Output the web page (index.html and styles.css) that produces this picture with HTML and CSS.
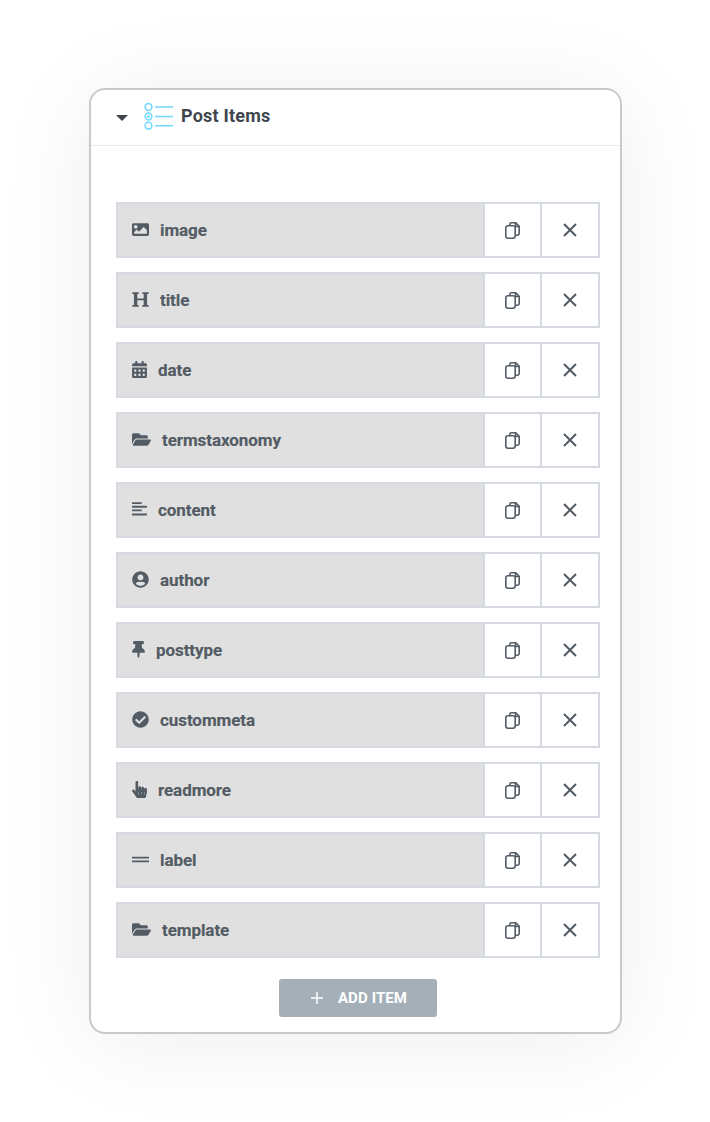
FILE: index.html
```html
<!DOCTYPE html>
<html lang="en">
<head>
<meta charset="utf-8">
<title>Post Items</title>
<link rel="stylesheet" href="styles.css">
</head>
<body>
<svg class="defs" width="0" height="0" aria-hidden="true">
  <symbol id="i-image" viewBox="0 0 512 512"><path d="M464 448H48c-26.51 0-48-21.49-48-48V112c0-26.51 21.49-48 48-48h416c26.51 0 48 21.49 48 48v288c0 26.51-21.49 48-48 48zM112 120c-30.928 0-56 25.072-56 56s25.072 56 56 56 56-25.072 56-56-25.072-56-56-56zM64 384h384V272l-87.515-87.515c-4.686-4.686-12.284-4.686-16.971 0L208 320l-55.515-55.515c-4.686-4.686-12.284-4.686-16.971 0L64 336v48z"/></symbol>
  <symbol id="i-heading" viewBox="0 0 512 512"><path d="M10 40h190v50h-40v135h192V90h-40V40h190v50h-48v332h48v50H312v-50h40V278H160v144h40v50H10v-50h48V90H10z"/></symbol>
  <symbol id="i-calendar" viewBox="0 0 448 512"><path d="M0 464c0 26.5 21.5 48 48 48h352c26.5 0 48-21.5 48-48V192H0v272zm320-196c0-6.6 5.4-12 12-12h40c6.6 0 12 5.4 12 12v40c0 6.6-5.4 12-12 12h-40c-6.6 0-12-5.4-12-12v-40zm0 128c0-6.6 5.4-12 12-12h40c6.6 0 12 5.4 12 12v40c0 6.6-5.4 12-12 12h-40c-6.6 0-12-5.4-12-12v-40zM192 268c0-6.6 5.4-12 12-12h40c6.6 0 12 5.4 12 12v40c0 6.6-5.4 12-12 12h-40c-6.6 0-12-5.4-12-12v-40zm0 128c0-6.6 5.4-12 12-12h40c6.6 0 12 5.4 12 12v40c0 6.6-5.4 12-12 12h-40c-6.6 0-12-5.4-12-12v-40zM64 268c0-6.6 5.4-12 12-12h40c6.6 0 12 5.4 12 12v40c0 6.6-5.4 12-12 12H76c-6.6 0-12-5.4-12-12v-40zm0 128c0-6.6 5.4-12 12-12h40c6.6 0 12 5.4 12 12v40c0 6.6-5.4 12-12 12H76c-6.6 0-12-5.4-12-12v-40zM400 64h-48V16c0-8.8-7.2-16-16-16h-32c-8.8 0-16 7.2-16 16v48H160V16c0-8.8-7.2-16-16-16h-32c-8.8 0-16 7.2-16 16v48H48C21.500 64 0 85.500 0 112v48h448v-48c0-26.500-21.500-48-48-48z"/></symbol>
  <symbol id="i-folder" viewBox="0 0 576 512"><path d="M572.694 292.093L500.27 416.248A63.997 63.997 0 0 1 444.989 448H45.025c-18.523 0-30.064-20.093-20.731-36.093l72.424-124.155A64 64 0 0 1 152 256h399.964c18.523 0 30.064 20.093 20.73 36.093zM152 224h328v-48c0-26.51-21.49-48-48-48H272l-64-64H48C21.49 64 0 85.49 0 112v278.046l69.077-118.418C86.214 242.25 117.989 224 152 224z"/></symbol>
  <symbol id="i-align" viewBox="0 0 448 512"><path d="M0 36h290v56H0zM0 146h448v56H0zM0 256h290v56H0zM0 380h448v56H0z"/></symbol>
  <symbol id="i-user" viewBox="0 0 496 512"><path d="M248 8C111 8 0 119 0 256s111 248 248 248 248-111 248-248S385 8 248 8zm0 96c48.6 0 88 39.4 88 88s-39.4 88-88 88-88-39.4-88-88 39.4-88 88-88zm0 344c-58.7 0-111.3-26.6-146.5-68.2 18.8-35.4 55.6-59.8 98.5-59.8 2.4 0 4.8.4 7.1 1.1 13 4.2 26.6 6.9 40.9 6.9 14.3 0 28-2.7 40.9-6.9 2.3-.7 4.7-1.1 7.1-1.1 42.9 0 79.7 24.4 98.5 59.8C359.3 421.4 306.7 448 248 448z"/></symbol>
  <symbol id="i-pin" viewBox="0 0 384 512"><path d="M298.028 214.267L285.793 96H328c13.255 0 24-10.745 24-24V24c0-13.255-10.745-24-24-24H56C42.745 0 32 10.745 32 24v48c0 13.255 10.745 24 24 24h42.207L85.972 214.267C37.465 236.82 0 277.261 0 328c0 13.255 10.745 24 24 24h136v104.007c0 1.242.289 2.467.845 3.578l24 48c2.941 5.882 11.364 5.893 14.311 0l24-48a8.008 8.008 0 0 0 .845-3.578V352h136c13.255 0 24-10.745 24-24-.001-51.183-37.983-91.42-85.973-113.733z"/></symbol>
  <symbol id="i-check" viewBox="0 0 512 512"><path d="M504 256c0 136.967-111.033 248-248 248S8 392.967 8 256 119.033 8 256 8s248 111.033 248 248zM227.314 387.314l184-184c6.248-6.248 6.248-16.379 0-22.627l-22.627-22.627c-6.248-6.249-16.379-6.249-22.628 0L216 308.118l-70.059-70.059c-6.248-6.248-16.379-6.248-22.628 0l-22.627 22.627c-6.248 6.248-6.248 16.379 0 22.627l104 104c6.249 6.249 16.379 6.249 22.628.001z"/></symbol>
  <symbol id="i-hand" viewBox="0 0 448 512"><path d="M448 240v96c0 3.084-.356 6.159-1.063 9.162l-32 136C410.686 499.23 394.562 512 376 512H168a40.004 40.004 0 0 1-32.35-16.473l-127.997-176c-12.993-17.866-9.043-42.883 8.822-55.876 17.867-12.994 42.884-9.043 55.877 8.823L104 315.992V40c0-22.091 17.908-40 40-40s40 17.909 40 40v200h8v-40c0-22.091 17.908-40 40-40s40 17.909 40 40v40h8v-24c0-22.091 17.908-40 40-40s40 17.909 40 40v24h8c0-22.091 17.908-40 40-40s40 17.909 40 40zm-256 80h-8v96h8v-96zm88 0h-8v96h8v-96zm88 0h-8v96h8v-96z"/></symbol>
  <symbol id="i-equals" viewBox="0 0 512 512"><path d="M0 172h512v56H0zM0 284h512v56H0z"/></symbol>
  <symbol id="i-copy" viewBox="0 0 15 17"><path d="M4.800 3.500V2.400C4.800 1.400 5.500.8 6.400.8h4.400l3.400 3.400v7.400c0 .9-.7 1.600-1.600 1.600h-2.100M10.500.8v3.700h3.700" fill="none" stroke="currentColor" stroke-width="1.600" stroke-linejoin="round"/><rect x=".8" y="3.800" width="9.400" height="12.400" rx="2.200" fill="none" stroke="currentColor" stroke-width="1.600"/></symbol>
  <symbol id="i-x" viewBox="0 0 14 14"><path d="M1 1l12 12M13 1L1 13" fill="none" stroke="currentColor" stroke-width="2"/></symbol>
</svg>

<main class="card">
  <header class="head">
    <span class="caret"></span>
    <svg class="list-icon" viewBox="0 0 30 28" aria-hidden="true">
      <g fill="none" stroke="#6fd8fc" stroke-width="1.500">
        <circle cx="4.500" cy="5" r="3.400"/><circle cx="4.500" cy="14.500" r="3.400"/><circle cx="4.500" cy="23.700" r="3.400"/>
        <path d="M11 5h18M11 14.500h18M11 23.700h18"/>
      </g>
      <circle cx="4.500" cy="14.500" r="1.500" fill="#6fd8fc"/>
    </svg>
    <h2 class="title">Post Items</h2>
  </header>
  <div class="rows">
    <div class="row"><div class="name"><svg class="ic w512"><use href="#i-image"/></svg>image</div><button class="act"><svg class="copy"><use href="#i-copy"/></svg></button><button class="act last"><svg class="x"><use href="#i-x"/></svg></button></div>
    <div class="row"><div class="name"><svg class="ic w512"><use href="#i-heading"/></svg>title</div><button class="act"><svg class="copy"><use href="#i-copy"/></svg></button><button class="act last"><svg class="x"><use href="#i-x"/></svg></button></div>
    <div class="row"><div class="name"><svg class="ic w448"><use href="#i-calendar"/></svg>date</div><button class="act"><svg class="copy"><use href="#i-copy"/></svg></button><button class="act last"><svg class="x"><use href="#i-x"/></svg></button></div>
    <div class="row"><div class="name"><svg class="ic w576"><use href="#i-folder"/></svg>termstaxonomy</div><button class="act"><svg class="copy"><use href="#i-copy"/></svg></button><button class="act last"><svg class="x"><use href="#i-x"/></svg></button></div>
    <div class="row"><div class="name"><svg class="ic w448"><use href="#i-align"/></svg>content</div><button class="act"><svg class="copy"><use href="#i-copy"/></svg></button><button class="act last"><svg class="x"><use href="#i-x"/></svg></button></div>
    <div class="row"><div class="name"><svg class="ic w496"><use href="#i-user"/></svg>author</div><button class="act"><svg class="copy"><use href="#i-copy"/></svg></button><button class="act last"><svg class="x"><use href="#i-x"/></svg></button></div>
    <div class="row"><div class="name"><svg class="ic w384"><use href="#i-pin"/></svg>posttype</div><button class="act"><svg class="copy"><use href="#i-copy"/></svg></button><button class="act last"><svg class="x"><use href="#i-x"/></svg></button></div>
    <div class="row"><div class="name"><svg class="ic w512"><use href="#i-check"/></svg>custommeta</div><button class="act"><svg class="copy"><use href="#i-copy"/></svg></button><button class="act last"><svg class="x"><use href="#i-x"/></svg></button></div>
    <div class="row"><div class="name"><svg class="ic w448"><use href="#i-hand"/></svg>readmore</div><button class="act"><svg class="copy"><use href="#i-copy"/></svg></button><button class="act last"><svg class="x"><use href="#i-x"/></svg></button></div>
    <div class="row"><div class="name"><svg class="ic w512"><use href="#i-equals"/></svg>label</div><button class="act"><svg class="copy"><use href="#i-copy"/></svg></button><button class="act last"><svg class="x"><use href="#i-x"/></svg></button></div>
    <div class="row"><div class="name"><svg class="ic w576"><use href="#i-folder"/></svg>template</div><button class="act"><svg class="copy"><use href="#i-copy"/></svg></button><button class="act last"><svg class="x"><use href="#i-x"/></svg></button></div>
  </div>
  <div class="foot">
    <button class="add"><svg class="plus" viewBox="0 0 12 12" aria-hidden="true"><path d="M6 0v12M0 6h12" fill="none" stroke="currentColor" stroke-width="1.500"/></svg>ADD ITEM</button>
  </div>
</main>
</body>
</html>
```

FILE: styles.css
```css
* { box-sizing: border-box; }
html, body { margin: 0; background: #fff; }
body {
  width: 710px;
  height: 1122px;
  padding: 88px 0 0 89px;
  overflow: hidden;
  font-family: Roboto, "Liberation Sans", sans-serif;
}
.defs { position: absolute; }
.card {
  width: 533px;
  height: 946px;
  background: #fff;
  border: 2px solid #c9c9c9;
  border-radius: 16px;
  box-shadow: 0 8px 100px rgba(0, 0, 0, 0.07);
}
.head {
  display: flex;
  align-items: center;
  height: 56px;
  padding: 0 0 3px 25px;
  border-bottom: 1px solid #e6e8ec;
}
.caret {
  width: 0;
  height: 0;
  border-left: 6px solid transparent;
  border-right: 6px solid transparent;
  border-top: 6px solid #3f464e;
  margin: 3px 16px 0 0;
}
.list-icon { width: 30px; height: 28px; flex: none; margin-right: 7px; }
.title {
  margin: 0 0 2px;
  font-size: 18px;
  font-weight: 700;
  letter-spacing: 0.2px;
  color: #3f464e;
}
.rows {
  display: flex;
  flex-direction: column;
  gap: 14px;
  padding: 56px 20px 0 25px;
}
.row {
  display: flex;
  height: 56px;
  border: 2px solid #d4dae0;
}
.name {
  flex: 1;
  display: flex;
  align-items: center;
  gap: 11px;
  padding: 0 0 1px 14px;
  background: #e0e0e0;
  color: #535c64;
  font-size: 17px;
  font-weight: 700;
  letter-spacing: -0.07px;
  -webkit-text-stroke: 0.15px #535c64;
}
.ic { height: 17px; fill: #535c64; flex: none; }
.w512 { width: 17px; }
.w496 { width: 17px; }
.w448 { width: 15px; }
.w576 { width: 19px; }
.w384 { width: 13px; }
.act {
  width: 57px;
  flex: none;
  display: flex;
  align-items: center;
  justify-content: center;
  padding: 0;
  background: #fff;
  border: 0;
  border-left: 2px solid #d4dae0;
  color: #535c64;
}
.act.last { width: 58px; }
.copy { width: 15px; height: 17px; }
.x { width: 14px; height: 14px; }
.foot { display: flex; justify-content: center; padding: 21px 0 0 5px; }
.add {
  display: flex;
  align-items: center;
  justify-content: center;
  gap: 15px;
  width: 158px;
  height: 38px;
  padding: 0 0 0 2px;
  border: 0;
  border-radius: 3px;
  background: #a4afb7;
  color: #fff;
  font-family: inherit;
  font-size: 15px;
  font-weight: 700;
  letter-spacing: 0.1px;
}
.plus { width: 12px; height: 12px; }
```
